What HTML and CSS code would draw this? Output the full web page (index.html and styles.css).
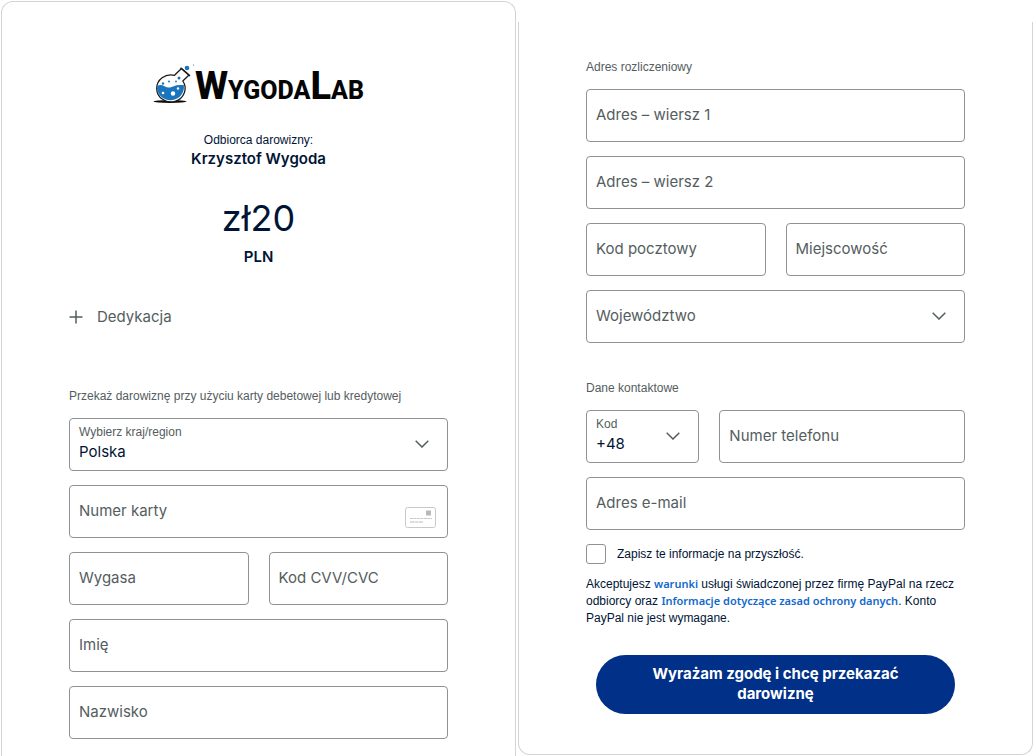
FILE: index.html
```html
<!DOCTYPE html>
<html lang="pl">
<head>
<meta charset="utf-8">
<meta name="viewport" content="width=device-width, initial-scale=1">
<title>WygodaLab – darowizna</title>
<link rel="stylesheet" href="styles.css">
</head>
<body>
<form class="page">
  <section class="card card-start">
    <header class="brand">
      <svg class="brand-mark" width="42" height="40" viewBox="0 0 42 40" aria-hidden="true">
        <ellipse cx="17" cy="37.500" rx="16.500" ry="1.500" fill="#0a0a0a"/>
        <path d="M21.500 11.300 28.500 4.500 36 11 29.800 17A14.200 13.500 0 1 1 21.500 11.300Z" fill="#fff" stroke="#1b1b1b" stroke-width="1.300" stroke-linejoin="round"/>
        <path d="M4 22q4-2 7.500.2t7 .8 5-1.800 7.300-.200a13.500 13.200 0 1 1-26.800 1Z" fill="#1b75bc"/>
        <path d="m27.500 3.800 9.500 8.200" stroke="#1b1b1b" stroke-width="1.500"/>
        <circle cx="34" cy="4" r="2.300" fill="#1b75bc"/>
        <circle cx="40.500" cy="1" r=".6" fill="#1b75bc"/>
        <circle cx="26" cy="14" r="1.500" fill="#1b75bc"/>
        <circle cx="16" cy="17.500" r="1" fill="#1b75bc"/>
        <circle cx="23" cy="17.500" r=".9" fill="#1b75bc"/>
        <circle cx="10" cy="19.500" r="1.200" fill="#1b75bc"/>
        <circle cx="10" cy="29" r="1.300" fill="#fff"/>
        <circle cx="20" cy="29.500" r="2.200" fill="#fff"/>
        <circle cx="25" cy="24.500" r="1.200" fill="#fff"/>
      </svg>
      <span class="brand-name">W<small>YGODA</small>L<small>AB</small></span>
    </header>
    <p class="receiver">Odbiorca darowizny:</p>
    <p class="receiver-name">Krzysztof Wygoda</p>
    <p class="amount">zł20</p>
    <p class="currency">PLN</p>
    <button class="note" type="button">
      <svg width="14" height="14" viewBox="0 0 14 14" aria-hidden="true"><path d="M7 .5v13M.5 7h13" stroke="#545d60" stroke-width="1.500"/></svg>
      Dedykacja
    </button>
    <h2 class="heading">Przekaż darowiznę przy użyciu karty debetowej lub kredytowej</h2>
    <div class="fields">
      <div class="choice">
        <label for="country">Wybierz kraj/region</label>
        <select id="country"><option>Polska</option></select>
        <svg class="chevron" width="14" height="8" viewBox="0 0 14 8" aria-hidden="true"><path d="m.7.700 6.300 6.300L13.300.700" fill="none" stroke="#545d60" stroke-width="1.500"/></svg>
      </div>
      <div class="with-icon">
        <input class="field" type="text" placeholder="Numer karty" aria-label="Numer karty">
        <svg class="card-icon" width="31" height="21" viewBox="0 0 31 21" aria-hidden="true">
          <rect x=".5" y=".5" width="30" height="20" rx="2" fill="#fff" stroke="#c9c9c9"/>
          <path d="M21 3.500h5v5h-5z" fill="#b8b8b8"/>
          <path d="M5 11.500h22" stroke="#c8c8c8" stroke-dasharray="3 .5"/>
          <path d="M5 15h13" stroke="#bbb" stroke-dasharray="4 .5"/>
        </svg>
      </div>
      <div class="pair">
        <input class="field" type="text" placeholder="Wygasa" aria-label="Wygasa">
        <input class="field" type="text" placeholder="Kod CVV/CVC" aria-label="Kod CVV/CVC">
      </div>
      <input class="field" type="text" placeholder="Imię" aria-label="Imię">
      <input class="field" type="text" placeholder="Nazwisko" aria-label="Nazwisko">
    </div>
  </section>

  <section class="card card-end">
    <h2 class="heading">Adres rozliczeniowy</h2>
    <div class="fields">
      <input class="field" type="text" placeholder="Adres – wiersz 1" aria-label="Adres – wiersz 1">
      <input class="field" type="text" placeholder="Adres – wiersz 2" aria-label="Adres – wiersz 2">
      <div class="pair">
        <input class="field" type="text" placeholder="Kod pocztowy" aria-label="Kod pocztowy">
        <input class="field" type="text" placeholder="Miejscowość" aria-label="Miejscowość">
      </div>
      <div class="choice choice-empty">
        <select aria-label="Województwo"><option>Województwo</option></select>
        <svg class="chevron" width="14" height="8" viewBox="0 0 14 8" aria-hidden="true"><path d="m.7.700 6.300 6.300L13.300.700" fill="none" stroke="#545d60" stroke-width="1.500"/></svg>
      </div>
    </div>
    <h2 class="heading heading-contact">Dane kontaktowe</h2>
    <div class="fields">
      <div class="phone">
        <div class="choice">
          <label for="code">Kod</label>
          <select id="code"><option>+48</option></select>
          <svg class="chevron" width="14" height="8" viewBox="0 0 14 8" aria-hidden="true"><path d="m.7.700 6.300 6.300L13.300.700" fill="none" stroke="#545d60" stroke-width="1.500"/></svg>
        </div>
        <input class="field" type="tel" placeholder="Numer telefonu" aria-label="Numer telefonu">
      </div>
      <input class="field" type="email" placeholder="Adres e-mail" aria-label="Adres e-mail">
    </div>
    <label class="remember"><input type="checkbox"><span>Zapisz te informacje na przyszłość.</span></label>
    <p class="terms">Akceptujesz <a href="#">warunki</a> usługi świadczonej przez firmę PayPal na rzecz odbiorcy oraz <a href="#">Informacje dotyczące zasad ochrony danych</a>. Konto PayPal nie jest wymagane.</p>
    <button class="submit" type="submit">Wyrażam zgodę i chcę przekazać darowiznę</button>
  </section>
</form>
</body>
</html>
```
FILE: styles.css
```css
* { box-sizing: border-box; }

body {
  margin: 0;
  background: #fff;
  color: #001435;
  font-family: Inter, "Liberation Sans", sans-serif;
  font-size: 15px;
}

p, h2 { margin: 0; }

.page {
  display: grid;
  grid-template-columns: 1fr 1fr;
  gap: 2px;
  padding: 1px 1px 0;
}

.card {
  padding: 0 67px;
  border: 1px solid #d4d4d4;
}

.card-start {
  padding-top: 62px;
  padding-bottom: 17px;
  border-bottom: 0;
  border-radius: 12px 12px 0 0;
}

.card-end {
  align-self: start;
  margin-top: 21px;
  padding-top: 37px;
  padding-bottom: 40px;
  border-top: 0;
  border-radius: 0 0 12px 12px;
}

.brand {
  display: flex;
  justify-content: center;
  height: 40px;
}

.brand-mark { flex: none; }

.brand-name {
  color: #050505;
  font: 800 38px/44px Roboto, sans-serif;
}

.brand-name small { font-size: 25px; }

.receiver,
.heading,
.choice label,
.remember,
.terms {
  font-family: "Liberation Sans", Arial, sans-serif;
  font-size: 12px;
}

.receiver {
  margin-top: 28px;
  line-height: 16px;
  text-align: center;
}

.receiver-name {
  font-weight: 600;
  line-height: 22px;
  text-align: center;
}

.amount {
  margin-top: 24px;
  font-size: 36px;
  line-height: 48px;
  text-align: center;
}

.currency {
  margin-top: 4px;
  font-weight: 600;
  line-height: 22px;
  text-align: center;
}

.note {
  display: flex;
  align-items: center;
  gap: 14px;
  margin-top: 38px;
  padding: 0;
  border: 0;
  background: none;
  color: #545d60;
  font: inherit;
  line-height: 22px;
}

.heading {
  color: #545d60;
  font-weight: 400;
  line-height: 16px;
}

.card-start .heading { margin-top: 60px; }

.heading-contact { margin-top: 37px; }

.fields {
  display: grid;
  gap: 14px;
  margin-top: 14px;
}

.field,
.choice {
  width: 100%;
  min-width: 0;
  height: 53px;
  border: 1px solid #909194;
  border-radius: 4px;
  background: #fff;
}

.field {
  display: block;
  padding: 0 9px 2px;
  color: #001435;
  font: inherit;
}

.field::placeholder {
  color: #545d60;
  opacity: 1;
}

.with-icon { position: relative; }

.card-icon {
  position: absolute;
  right: 12px;
  bottom: 10px;
}

.pair {
  display: grid;
  grid-template-columns: 1fr 1fr;
  gap: 20px;
}

.phone {
  display: grid;
  grid-template-columns: 6fr 13fr;
  gap: 20px;
}

.choice {
  display: flex;
  flex-direction: column;
  position: relative;
  padding-top: 5px;
}

.choice label {
  padding: 0 9px;
  color: #545d60;
  line-height: 16px;
}

.choice select {
  width: 100%;
  padding: 0 9px;
  border: 0;
  appearance: none;
  background: none;
  color: #001435;
  font: inherit;
  line-height: 24px;
}

.choice-empty { padding: 0; }

.choice-empty select {
  height: 100%;
  padding-bottom: 2px;
  color: #545d60;
}

.chevron {
  position: absolute;
  top: 21px;
  right: 18px;
  pointer-events: none;
}

.remember {
  display: flex;
  align-items: center;
  gap: 11px;
  margin-top: 14px;
  line-height: 20px;
}

.remember input {
  width: 20px;
  height: 20px;
  margin: 0;
  border: 1px solid #909194;
  border-radius: 3px;
  appearance: none;
}

.terms {
  margin-top: 12px;
  line-height: 17px;
}

.terms a {
  color: #1268cc;
  font-family: "Noto Sans", sans-serif;
  font-size: 11px;
  font-weight: 600;
  line-height: 1;
  text-decoration: none;
}

.submit {
  display: block;
  width: calc(100% - 20px);
  margin: 28px 10px 0;
  padding: 9px 48px 10px;
  border: 0;
  border-radius: 30px;
  background: #003087;
  color: #fff;
  font: inherit;
  font-weight: 700;
  line-height: 20px;
}
```
